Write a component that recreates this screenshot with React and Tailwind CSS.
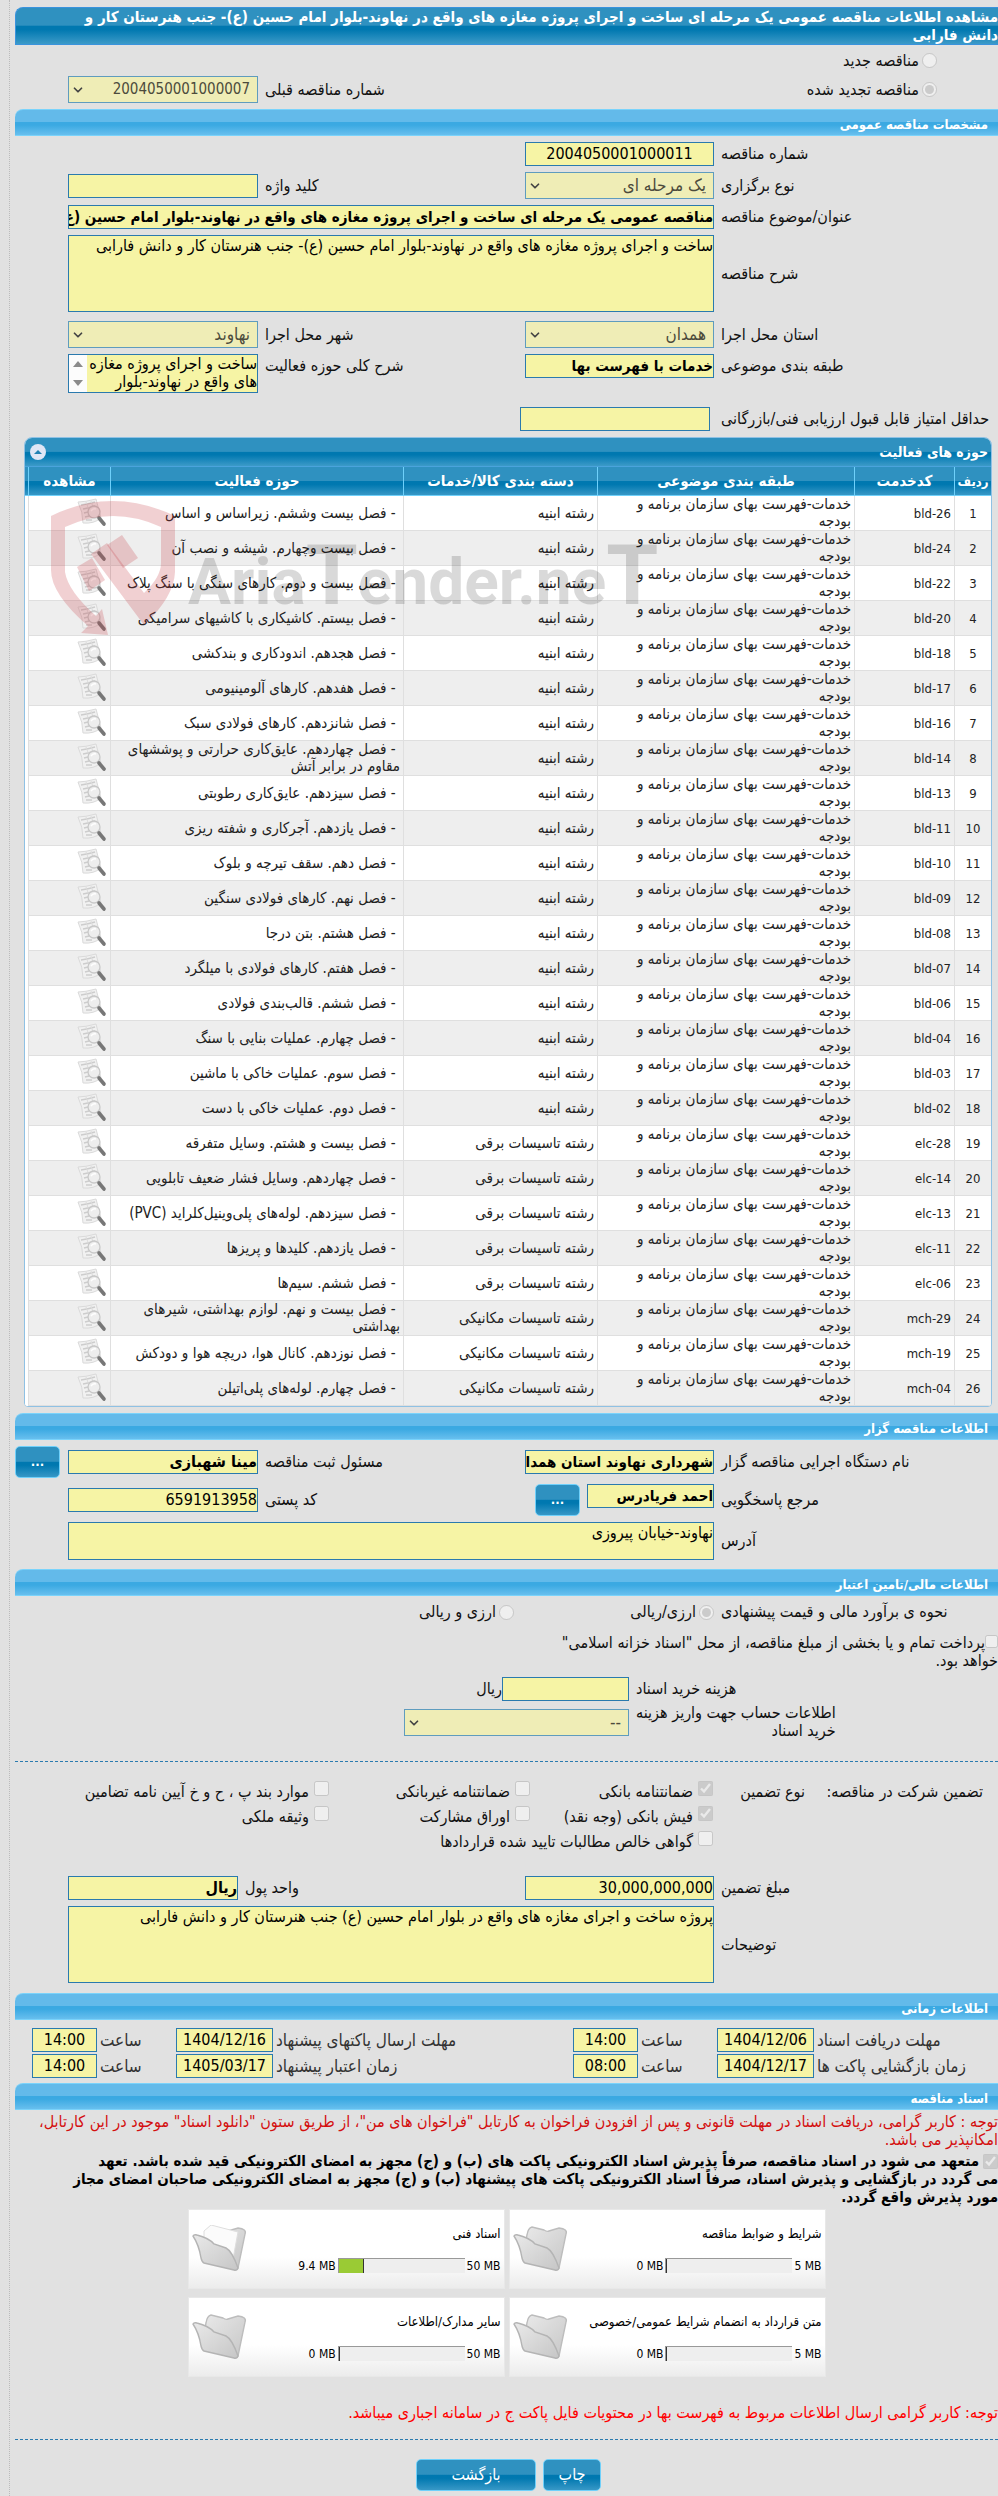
import React from 'react';
import { ChevronDown } from 'lucide-react';

const BUDGET = 'خدمات-فهرست بهای سازمان برنامه و بودجه';
const BUILDING = 'رشته ابنیه';
const ELECTRIC = 'رشته تاسیسات برقی';
const MECHANIC = 'رشته تاسیسات مکانیکی';

const activities = [
    ['bld-26', BUILDING, 'فصل بیست وششم. زیراساس و اساس'],
    ['bld-24', BUILDING, 'فصل بیست وچهارم. شیشه و نصب آن'],
    ['bld-22', BUILDING, 'فصل بیست و دوم. کارهای سنگی با سنگ پلاک'],
    ['bld-20', BUILDING, 'فصل بیستم. کاشیکاری با کاشیهای سرامیکی'],
    ['bld-18', BUILDING, 'فصل هجدهم. اندودکاری و بندکشی'],
    ['bld-17', BUILDING, 'فصل هفدهم. کارهای آلومینیومی'],
    ['bld-16', BUILDING, 'فصل شانزدهم. کارهای فولادی سبک'],
    ['bld-14', BUILDING, 'فصل چهاردهم. عایق‌کاری حرارتی و پوششهای مقاوم در برابر آتش'],
    ['bld-13', BUILDING, 'فصل سیزدهم. عایق‌کاری رطوبتی'],
    ['bld-11', BUILDING, 'فصل یازدهم. آجرکاری و شفته ریزی'],
    ['bld-10', BUILDING, 'فصل دهم. سقف تیرچه و بلوک'],
    ['bld-09', BUILDING, 'فصل نهم. کارهای فولادی سنگین'],
    ['bld-08', BUILDING, 'فصل هشتم. بتن درجا'],
    ['bld-07', BUILDING, 'فصل هفتم. کارهای فولادی با میلگرد'],
    ['bld-06', BUILDING, 'فصل ششم. قالب‌بندی فولادی'],
    ['bld-04', BUILDING, 'فصل چهارم. عملیات بنایی با سنگ'],
    ['bld-03', BUILDING, 'فصل سوم. عملیات خاکی با ماشین'],
    ['bld-02', BUILDING, 'فصل دوم. عملیات خاکی با دست'],
    ['elc-28', ELECTRIC, 'فصل بیست و هشتم. وسایل متفرقه'],
    ['elc-14', ELECTRIC, 'فصل چهاردهم. وسایل فشار ضعیف تابلویی'],
    ['elc-13', ELECTRIC, 'فصل سیزدهم. لوله‌های پلی‌وینیل‌کلراید (PVC)'],
    ['elc-11', ELECTRIC, 'فصل یازدهم. کلیدها و پریزها'],
    ['elc-06', ELECTRIC, 'فصل ششم. سیم‌ها'],
    ['mch-29', MECHANIC, 'فصل بیست و نهم. لوازم بهداشتی، شیرهای بهداشتی'],
    ['mch-19', MECHANIC, 'فصل نوزدهم. کانال هوا، دریچه هوا و دودکش'],
    ['mch-04', MECHANIC, 'فصل چهارم. لوله‌های پلی‌اتیلن'],
];

const fieldStyle = 'block w-full border border-[#2a7aae] bg-[#f6f4a5] text-black outline-none';
const blueGradient =
    'bg-[linear-gradient(#2f91c0_0%,#2f91c0_48%,#0078b0_50%,#0078b0_60%,#3c9ac8_100%)]';
const rowGrid = 'grid grid-cols-[284px_189px_minmax(0,1fr)_190px_53px]';

function Section({ title }) {
    return (
        <h2 className="flex h-[27px] items-center rounded-tl-lg border-y border-[#7ad3fb] bg-[linear-gradient(#63baea_0%,#63baea_48%,#3ba9e2_50%,#3ba9e2_60%,#68bfee_100%)] pr-[10px] pt-1 text-[13px] font-bold text-white">
            {title}
        </h2>
    );
}

function Label({ htmlFor, children, className = '' }) {
    return (
        <label htmlFor={htmlFor} className={`pl-[7px] text-left leading-[18px] ${className}`}>
            {children}
        </label>
    );
}

function Field({ id, value = '', className = 'text-base' }) {
    return (
        <input id={id} type="text" readOnly value={value} className={`${fieldStyle} h-6 ${className}`} />
    );
}

function Select({ id, value, className = 'text-[17px]' }) {
    return (
        <div className="relative">
            <select
                id={id}
                disabled
                className={`block h-[27px] w-full appearance-none border border-[#5f9cbe] bg-[#efedb6] pr-[7px] text-[#4c4b3c] opacity-100 ${className}`}
            >
                <option>{value}</option>
            </select>
            <ChevronDown size={14} strokeWidth={3} className="pointer-events-none absolute left-[3px] top-[7px] text-[#444]" />
        </div>
    );
}

function Check({ id, children, checked = false }) {
    return (
        <div className="flex items-start gap-[5px]">
            <input id={id} type="checkbox" disabled checked={checked} readOnly className="size-[15px] shrink-0" />
            <label htmlFor={id} className="whitespace-nowrap pt-px leading-5">{children}</label>
        </div>
    );
}

function BlueButton({ children, className }) {
    return (
        <button
            type="button"
            className={`h-8 rounded-[5px] border border-[#6fd0fa] bg-origin-border text-white ${blueGradient} ${className}`}
        >
            {children}
        </button>
    );
}

function SearchDocIcon() {
    return (
        <svg width="30" height="30" viewBox="0 0 30 30">
            <path d="M1 4 Q8 4 19 1 L24 20 Q17 26 6 25 Q6 14 1 4Z" fill="#f1f1f1" stroke="#dadada" />
            <path d="M4 7 Q11 6 18 4 M6 11 Q12 10 18 8 M7 15 L11 14 M8 19 L12 18 M9 22 L15 22" stroke="#cdcdcd" strokeWidth="1.5" fill="none" />
            <path d="M9 4 Q12 10 12 16 M14 3 L16 9" stroke="#dcdcdc" fill="none" />
            <circle cx="17" cy="14" r="6" fill="#ededed" fillOpacity=".85" stroke="#c8c8c8" strokeWidth="1.3" />
            <path d="M14 13 Q16 10 19 11" stroke="#fff" strokeWidth="1.5" fill="none" />
            <path d="M22 20 L27 26" stroke="#777" strokeWidth="3.6" strokeLinecap="round" />
        </svg>
    );
}

function FolderIcon({ full }) {
    return (
        <svg width="56" height="48" viewBox="0 0 56 48">
            <defs>
                <linearGradient id="folder" x1="0" y1="0" x2="1" y2="1">
                    <stop offset="0" stopColor="#e9e9e9" />
                    <stop offset="1" stopColor="#c6c6c6" />
                </linearGradient>
            </defs>
            <path d="M14 10 Q15 3 19 2 L31 5 Q34 7 36 6 L46 3 Q55 4 53 9 L46 43 Q45 46 42 44 L12 20Z" fill="url(#folder)" stroke="#bdbdbd" strokeWidth="1.4" />
            {full && <path d="M12 6 L19 0 L46 7 L41 34 L34 23 L12 20Z" fill="#fbfbfb" stroke="#dedede" />}
            <path d="M1 11 Q2 9 5 10 Q17 13 22 19 L34 23 Q40 26 46 43 Q45 46 42 45 L12 38 Q10 37 9 33 Q7 20 1 11Z" fill="url(#folder)" stroke="#b4b4b4" strokeWidth="1.4" />
        </svg>
    );
}

function Watermark() {
    return (
        <div dir="ltr" aria-hidden="true" className="pointer-events-none absolute left-[25px] top-[60px] flex">
            <svg width="128" height="142" viewBox="0 0 128 142" fill="#c33b43" fillOpacity=".24">
                <path
                    fillRule="evenodd"
                    d="M1 18 Q62 -12 125 18 V74 Q124 99 94 127 L41 56 L57 45 L94 95 Q111 79 111 65 V29 Q63 7 15 29 V74 Q18 93 46 118 L52 111 L58 137 L31 135 L38 128 Q1 96 1 72Z"
                />
                <path d="M27 69 L42 60 L55 82 L39 93Z" />
                <path d="M57 47 L72 37 L88 60 L73 70Z" />
            </svg>
            <span className="whitespace-nowrap pl-[10px] pt-[28px] font-[Roboto,sans-serif] text-[64px] font-bold leading-[100px] text-black/15">
                Aria<span className="text-[84px]">T</span>ender.ne<span className="text-[84px]">T</span>
            </span>
        </div>
    );
}

function ActivityTable() {
    const th = 'border-b border-l border-[#6fd0fa] px-1 text-[15px] font-bold';
    const td = 'border-b border-l border-[#dfdfdf] px-[3px] py-0';
    return (
        <section className="relative mx-[6px] ml-[9px] mt-1.5 overflow-hidden rounded-t-lg rounded-b border border-[#8fc1e4] bg-white">
            <div className={`flex h-[29px] items-center justify-between border-b border-[#4aa3dc] pl-[5px] pr-[3px] text-white ${blueGradient}`}>
                <h3 className="text-sm font-bold">حوزه های فعالیت</h3>
                <button type="button" aria-label="بستن" className="flex size-4 items-center justify-center rounded-full bg-[#dfe6f5]">
                    <svg width="8" height="4" viewBox="0 0 8 4"><path d="M0 4 L4 0 L8 4Z" fill="#2181b4" /></svg>
                </button>
            </div>
            <table className="w-full table-fixed border-separate border-spacing-0 text-[13px] leading-[17px]">
                <colgroup>
                    <col className="w-[37px]" />
                    <col className="w-[100px]" />
                    <col className="w-[257px]" />
                    <col className="w-[194px]" />
                    <col />
                    <col className="w-[82px]" />
                    <col className="w-[3px]" />
                </colgroup>
                <thead>
                    <tr className={`h-[29px] text-white ${blueGradient}`}>
                        <th className="border-b border-l border-[#6fd0fa] p-0 text-[13px] font-bold">ردیف</th>
                        <th className={th}>کدخدمت</th>
                        <th className={th}>طبقه بندی موضوعی</th>
                        <th className={th}>دسته بندی کالا/خدمات</th>
                        <th className={th}>حوزه فعالیت</th>
                        <th className={th}>مشاهده</th>
                        <th className="border-b border-[#6fd0fa] p-0"></th>
                    </tr>
                </thead>
                <tbody className="text-[#222]">
                    {activities.map(([code, category, name], i) => (
                        <tr key={code} className={`h-[35px] ${i % 2 ? 'bg-[#eeeeee]' : 'bg-white'}`}>
                            <td className={td + ' text-center'}>{i + 1}</td>
                            <td className={td}><span dir="ltr">{code}</span></td>
                            <td className={td + ' text-[15px]'}>{BUDGET}</td>
                            <td className={td + ' text-[15px]'}>{category}</td>
                            <td className={td + ' text-[15px]'}>&nbsp;- {name}</td>
                            <td className={td}>
                                <button type="button" aria-label="مشاهده" className="block">
                                    <SearchDocIcon />
                                </button>
                            </td>
                            <td className="bg-white p-0"></td>
                        </tr>
                    ))}
                </tbody>
            </table>
            <Watermark />
        </section>
    );
}

function TimeRow({ id, label, date, hour }) {
    return (
        <>
            <Label htmlFor={id} className="whitespace-nowrap !pl-[3px] text-[17px] text-[#333]">{label}</Label>
            <Field id={id} value={date} className="text-center text-base" />
            <Label htmlFor={id + '-hour'} className="!pl-[3px] text-[17px] text-[#333]">ساعت</Label>
            <Field id={id + '-hour'} value={hour} className="text-center text-base" />
        </>
    );
}

function FileCard({ title, used, total, percent }) {
    return (
        <div className="flex h-[80px] items-center border border-[#e8e8e8] bg-[linear-gradient(#fff_60%,#ececec)] pl-[3px] text-xs text-black">
            <div className="flex flex-1 flex-col gap-4 pr-[3px]">
                <p className="whitespace-nowrap text-[13px] leading-[17px]">{title}</p>
                <div dir="ltr" className="flex items-center justify-end gap-[2px]">
                    <span>{used} MB</span>
                    <div className="h-[15px] w-[127px] border-l border-t border-[#999] bg-[#eee]">
                        <div className="h-full border-r border-[#333] bg-[#9acb34]" style={{ width: percent + '%' }}></div>
                    </div>
                    <span>{total} MB</span>
                </div>
            </div>
            <div className="w-[56px] shrink-0"><FolderIcon full={percent > 0} /></div>
        </div>
    );
}

function App() {
    return (
        <div dir="rtl" className="min-h-screen overflow-hidden bg-[#e1e1e1] pl-[9px] font-['DejaVu_Sans_Condensed','DejaVu_Sans',sans-serif] text-base text-[#111]">
            <main className="border-l border-dotted border-[#bbb] pb-[5px] pl-[5px] pt-[7px]">
                <h1 className={`min-h-[38px] rounded-tl-lg border border-r-0 border-[#3a93dd] text-[15px] font-bold leading-[18px] text-white ${blueGradient}`}>
                    مشاهده اطلاعات مناقصه عمومی یک مرحله ای ساخت و اجرای پروژه مغازه های واقع در نهاوند-بلوار امام حسین (ع)- جنب هنرستان کار و<br />
                    دانش فارابی
                </h1>

                <div className="flex h-[31px] items-center gap-[3px] pr-[61px]">
                    <input id="tender-new" name="kind" type="radio" disabled className="size-[15px]" />
                    <label htmlFor="tender-new">مناقصه جدید</label>
                </div>
                <div className="grid grid-cols-[473px_minmax(0,1fr)_190px_53px] items-center">
                    <div className="flex items-center gap-[3px] pr-[61px]">
                        <input id="tender-renew" name="kind" type="radio" disabled defaultChecked className="size-[15px]" />
                        <label htmlFor="tender-renew">مناقصه تجدید شده</label>
                    </div>
                    <Label htmlFor="prev">شماره مناقصه قبلی</Label>
                    <Select id="prev" value="2004050001000007" className="text-[15px]" />
                </div>

                <div className="h-[6px]"></div>
                <Section title="مشخصات مناقصه عمومی" />
                <div className={`${rowGrid} items-center gap-y-1.5 pt-1.5`}>
                    <Label htmlFor="number">شماره مناقصه</Label>
                    <Field id="number" value="2004050001000011" className="text-center text-base" />
                    <Label htmlFor="stage" className="col-start-1">نوع برگزاری</Label>
                    <Select id="stage" value="یک مرحله ای" />
                    <Label htmlFor="keyword">کلید واژه</Label>
                    <Field id="keyword" />
                    <Label htmlFor="title" className="col-start-1">عنوان/موضوع مناقصه</Label>
                    <div className="col-span-3">
                        <Field id="title" value="مناقصه عمومی یک مرحله ای ساخت و اجرای پروژه مغازه های واقع در نهاوند-بلوار امام حسین (ع)- جنب هنرستان کار و دانش فارابی" className="text-[15px] font-bold" />
                    </div>
                    <Label htmlFor="desc" className="col-start-1">شرح مناقصه</Label>
                    <textarea id="desc" readOnly className={`${fieldStyle} col-span-3 h-[77px] resize-none text-base leading-5`} value="ساخت و اجرای پروژه مغازه های واقع در نهاوند-بلوار امام حسین (ع)- جنب هنرستان کار و دانش فارابی" />
                </div>
                <div className={`${rowGrid} items-center pt-[9px]`}>
                    <Label htmlFor="province">استان محل اجرا</Label>
                    <Select id="province" value="همدان" />
                    <Label htmlFor="city">شهر محل اجرا</Label>
                    <Select id="city" value="نهاوند" />
                </div>
                <div className={`${rowGrid} items-start pt-1.5`}>
                    <Label htmlFor="subject" className="pt-[3px]">طبقه بندی موضوعی</Label>
                    <Field id="subject" value="خدمات با فهرست بها" className="text-[15px] font-bold" />
                    <Label htmlFor="scope" className="pt-[3px]">شرح کلی حوزه فعالیت</Label>
                    <div className="flex h-[39px] border border-[#2a7aae] bg-[#f6f4a5]">
                        <textarea id="scope" readOnly className="h-full min-w-0 flex-1 resize-none overflow-hidden text-base leading-[18px] text-black outline-none" value="ساخت و اجرای پروژه مغازه های واقع در نهاوند-بلوار" />
                        <div className="flex w-[18px] flex-col items-center justify-between bg-[#fcfcfc] py-1.5">
                            <svg width="10" height="6" viewBox="0 0 10 6"><path d="M0 6 L5 0 L10 6Z" fill="#8b8b8b" /></svg>
                            <svg width="10" height="6" viewBox="0 0 10 6"><path d="M0 0 L5 6 L10 0Z" fill="#8b8b8b" /></svg>
                        </div>
                    </div>
                </div>
                <div className="grid grid-cols-[288px_190px] items-center pt-[14px]">
                    <Label htmlFor="score" className="!pl-[11px] whitespace-nowrap">حداقل امتیاز قابل قبول ارزیابی فنی/بازرگانی</Label>
                    <Field id="score" />
                </div>

                <ActivityTable />

                <div className="h-[6px]"></div>
                <Section title="اطلاعات مناقصه گزار" />
                <div className={`${rowGrid} items-center pt-1.5`}>
                    <Label htmlFor="org">نام دستگاه اجرایی مناقصه گزار</Label>
                    <Field id="org" value="شهرداری نهاوند استان همدان" className="text-[15px] font-bold" />
                    <Label htmlFor="owner">مسئول ثبت مناقصه</Label>
                    <Field id="owner" value="مینا شهبازی" className="text-base font-bold" />
                    <BlueButton className="mr-2 w-[45px] text-[13px] font-bold">...</BlueButton>
                </div>
                <div className={`${rowGrid} items-center pt-1.5`}>
                    <Label htmlFor="contact">مرجع پاسخگویی</Label>
                    <div className="flex gap-[7px]">
                        <div className="w-[127px]"><Field id="contact" value="احمد فریادرس" className="text-[15px] font-bold" /></div>
                        <BlueButton className="w-[45px] text-[13px] font-bold">...</BlueButton>
                    </div>
                    <Label htmlFor="zip">کد پستی</Label>
                    <Field id="zip" value="6591913958" />
                </div>
                <div className={`${rowGrid} items-center pb-[9px] pt-1.5`}>
                    <Label htmlFor="address">آدرس</Label>
                    <textarea id="address" readOnly className={`${fieldStyle} col-span-3 h-[38px] resize-none text-base leading-5`} value="نهاوند-خیابان پیروزی" />
                </div>

                <Section title="اطلاعات مالی/تامین اعتبار" />
                <div className="flex h-[32px] items-center">
                    <p className="w-[284px] whitespace-nowrap pl-[7px] text-left">نحوه ی برآورد مالی و قیمت پیشنهادی</p>
                    <div className="flex w-[200px] items-center gap-[3px]">
                        <input id="cur-one" name="currency" type="radio" disabled defaultChecked className="size-[15px]" />
                        <label htmlFor="cur-one">ارزی/ریالی</label>
                    </div>
                    <div className="flex items-center gap-[3px]">
                        <input id="cur-both" name="currency" type="radio" disabled className="size-[15px]" />
                        <label htmlFor="cur-both">ارزی و ریالی</label>
                    </div>
                </div>
                <div className="pt-1.5 leading-[18px]">
                    <input id="treasury" type="checkbox" disabled className="size-[13px]" />
                    <label htmlFor="treasury">پرداخت تمام و یا بخشی از مبلغ مناقصه، از محل "اسناد خزانه اسلامی"<br />خواهد بود.</label>
                </div>
                <div className="grid grid-cols-[369px_225px] items-center gap-y-[3px] pt-[7px]">
                    <Label htmlFor="doc-cost">هزینه خرید اسناد</Label>
                    <div className="flex items-center">
                        <div className="w-[127px]"><Field id="doc-cost" /></div>
                        <span className="leading-[18px]">ریال</span>
                    </div>
                    <Label htmlFor="account" className="justify-self-end !text-right">
                        اطلاعات حساب جهت واریز هزینه<br />خرید اسناد
                    </Label>
                    <Select id="account" value="--" />
                </div>

                <hr className="mt-[21px] border-t border-dashed border-[#2a7aae]" />

                <div className="flex pr-[15px] pt-[19px]">
                    <p className="w-[178px] whitespace-nowrap pt-px leading-5">تضمین شرکت در مناقصه:</p>
                    <p className="w-[92px] pt-px leading-5">نوع تضمین</p>
                    <div className="grid grid-cols-[183px_201px_auto] gap-y-1">
                        <Check id="g1" checked>ضمانتنامه بانکی</Check>
                        <Check id="g2">ضمانتنامه غیربانکی</Check>
                        <Check id="g3">موارد بند پ ، ح و خ آیین نامه تضامین</Check>
                        <Check id="g4" checked>فیش بانکی (وجه نقد)</Check>
                        <Check id="g5">اوراق مشارکت</Check>
                        <Check id="g6">وثیقه ملکی</Check>
                        <Check id="g7">گواهی خالص مطالبات تایید شده قراردادها</Check>
                    </div>
                </div>

                <div className={`${rowGrid} items-center gap-y-1.5 pb-[10px] pt-[24px]`}>
                    <Label htmlFor="amount">مبلغ تضمین</Label>
                    <Field id="amount" value="30,000,000,000" />
                    <div className="col-span-2 flex items-center justify-end">
                        <Label htmlFor="unit">واحد پول</Label>
                        <div className="w-[170px]"><Field id="unit" value="ریال" className="text-base font-bold" /></div>
                    </div>
                    <Label htmlFor="notes" className="col-start-1">توضیحات</Label>
                    <textarea id="notes" readOnly className={`${fieldStyle} col-span-3 h-[77px] resize-none text-base leading-5`} value="پروژه ساخت و اجرای مغازه های واقع در بلوار امام حسین (ع) جنب هنرستان کار و دانش فارابی" />
                </div>

                <Section title="اطلاعات زمانی" />
                <div className="grid grid-cols-[184px_97px_79px_65px_minmax(0,1fr)_97px_79px_65px] items-center gap-y-[2px] pb-[5px] pl-[17px] pt-2">
                    <TimeRow id="receive" label="مهلت دریافت اسناد" date="1404/12/06" hour="14:00" />
                    <TimeRow id="send" label="مهلت ارسال پاکتهای پیشنهاد" date="1404/12/16" hour="14:00" />
                    <TimeRow id="open" label="زمان بازگشایی پاکت ها" date="1404/12/17" hour="08:00" />
                    <TimeRow id="valid" label="زمان اعتبار پیشنهاد" date="1405/03/17" hour="14:00" />
                </div>

                <Section title="اسناد مناقصه" />
                <p className="pt-[3px] leading-[18px] text-[#d40f0f]">
                    توجه : کاربر گرامی، دریافت اسناد در مهلت قانونی و پس از افزودن فراخوان به کارتابل "فراخوان های من"، از طریق ستون "دانلود اسناد" موجود در این کارتابل،<br />
                    امکانپذیر می باشد.
                </p>
                <div className="pt-[3px] text-[15px] font-bold leading-[18px] text-black">
                    <input id="commit" type="checkbox" disabled defaultChecked className="ml-1 size-[15px] align-middle" />
                    <label htmlFor="commit">
                        متعهد می شود در اسناد مناقصه، صرفاً پذیرش اسناد الکترونیکی پاکت های (ب) و (ج) مجهز به امضای الکترونیکی قید شده باشد. تعهد<br />
                        می گردد در بازگشایی و پذیرش اسناد، صرفاً اسناد الکترونیکی پاکت های پیشنهاد (ب) و (ج) مجهز به امضای الکترونیکی صاحبان امضای مجاز<br />
                        مورد پذیرش واقع گردد.
                    </label>
                </div>

                <div className="mx-auto grid w-[638px] grid-cols-2 gap-x-1 gap-y-2 pt-[3px]">
                    <FileCard title="شرایط و ضوابط مناقصه" used="0" total="5" percent={0} />
                    <FileCard title="اسناد فنی" used="9.4" total="50" percent={20} />
                    <FileCard title="متن قرارداد به انضمام شرایط عمومی/خصوصی" used="0" total="5" percent={0} />
                    <FileCard title="سایر مدارک/اطلاعات" used="0" total="50" percent={0} />
                </div>

                <p className="pt-[27px] leading-[18px] text-[#ff0000]">
                    توجه: کاربر گرامی ارسال اطلاعات مربوط به فهرست بها در محتویات فایل پاکت ج در سامانه اجباری میباشد.
                </p>
                <hr className="mt-[17px] border-t border-dashed border-[#2a7aae]" />
                <div className="flex justify-center gap-[7px] pl-1 pt-[19px]">
                    <BlueButton className="w-[58px]">چاپ</BlueButton>
                    <BlueButton className="w-[120px]">بازگشت</BlueButton>
                </div>
            </main>
        </div>
    );
}

export default App;
